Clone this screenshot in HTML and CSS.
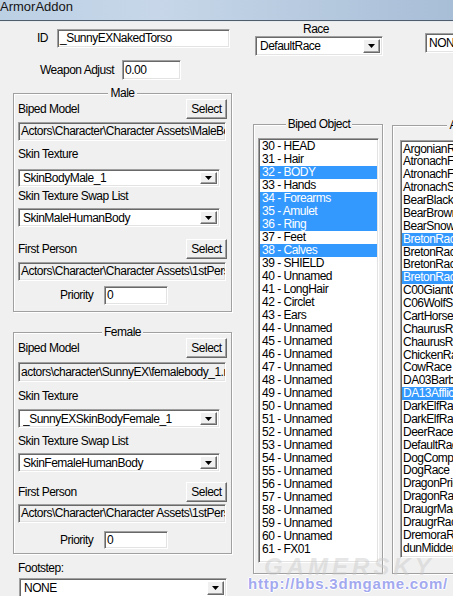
FILE: index.html
```html
<!DOCTYPE html>
<html>
<head>
<meta charset="utf-8">
<title>ArmorAddon</title>
<link rel="stylesheet" href="styles.css">
</head>
<body>
<div class="window">
  <div class="titlebar">ArmorAddon</div>
  <div class="content">
    <div class="col-left">
      <div class="id-row">
        <span class="id-lbl">ID</span>
        <div class="field id-field">_SunnyEXNakedTorso</div>
      </div>
      <div class="wa-row">
        <span class="wa-lbl">Weapon Adjust</span>
        <div class="field wa-field">0.00</div>
      </div>

      <div class="group male">
        <div class="group-title">Male</div>
        <div class="sel-row"><span>Biped Model</span><div class="btn">Select</div></div>
        <div class="field ro path path-a">Actors\Character\Character Assets\MaleBody_1.nif</div>
        <div class="sub-lbl lbl-a">Skin Texture</div>
        <div class="field combo combo-a"><span class="combo-text">SkinBodyMale_1</span><span class="drop"><svg width="7" height="4" viewBox="0 0 7 4"><path d="M0 0H7L3.5 4Z"/></svg></span></div>
        <div class="sub-lbl lbl-b">Skin Texture Swap List</div>
        <div class="field combo combo-b"><span class="combo-text">SkinMaleHumanBody</span><span class="drop"><svg width="7" height="4" viewBox="0 0 7 4"><path d="M0 0H7L3.5 4Z"/></svg></span></div>
        <div class="sel-row sel-b"><span>First Person</span><div class="btn">Select</div></div>
        <div class="field ro path path-b">Actors\Character\Character Assets\1stPersonMaleBody_1.nif</div>
        <div class="prio-row"><span class="prio-lbl">Priority</span><div class="field prio-field">0</div></div>
      </div>

      <div class="group female">
        <div class="group-title">Female</div>
        <div class="sel-row"><span>Biped Model</span><div class="btn">Select</div></div>
        <div class="field ro path path-a">actors\character\SunnyEX\femalebody_1.nif</div>
        <div class="sub-lbl lbl-a">Skin Texture</div>
        <div class="field combo combo-a"><span class="combo-text">_SunnyEXSkinBodyFemale_1</span><span class="drop"><svg width="7" height="4" viewBox="0 0 7 4"><path d="M0 0H7L3.5 4Z"/></svg></span></div>
        <div class="sub-lbl lbl-b">Skin Texture Swap List</div>
        <div class="field combo combo-b"><span class="combo-text">SkinFemaleHumanBody</span><span class="drop"><svg width="7" height="4" viewBox="0 0 7 4"><path d="M0 0H7L3.5 4Z"/></svg></span></div>
        <div class="sel-row sel-b"><span>First Person</span><div class="btn">Select</div></div>
        <div class="field ro path path-b">Actors\Character\Character Assets\1stPersonFemaleBody_1.nif</div>
        <div class="prio-row"><span class="prio-lbl">Priority</span><div class="field prio-field">0</div></div>
      </div>

      <div class="foot-lbl">Footstep:</div>
      <div class="field combo foot-combo"><span class="combo-text">NONE</span><span class="drop"><svg width="7" height="4" viewBox="0 0 7 4"><path d="M0 0H7L3.5 4Z"/></svg></span></div>
    </div>

    <div class="col-mid">
      <div class="race-lbl">Race</div>
      <div class="field combo race-combo"><span class="combo-text">DefaultRace</span><span class="drop"><svg width="7" height="4" viewBox="0 0 7 4"><path d="M0 0H7L3.5 4Z"/></svg></span></div>
      <div class="group biped-group">
        <div class="group-title">Biped Object</div>
        <div class="listbox biped-list">
          <div class="item">30 - HEAD</div>
          <div class="item">31 - Hair</div>
          <div class="item sel">32 - BODY</div>
          <div class="item">33 - Hands</div>
          <div class="item sel">34 - Forearms</div>
          <div class="item sel">35 - Amulet</div>
          <div class="item sel">36 - Ring</div>
          <div class="item">37 - Feet</div>
          <div class="item sel">38 - Calves</div>
          <div class="item">39 - SHIELD</div>
          <div class="item">40 - Unnamed</div>
          <div class="item">41 - LongHair</div>
          <div class="item">42 - Circlet</div>
          <div class="item">43 - Ears</div>
          <div class="item">44 - Unnamed</div>
          <div class="item">45 - Unnamed</div>
          <div class="item">46 - Unnamed</div>
          <div class="item">47 - Unnamed</div>
          <div class="item">48 - Unnamed</div>
          <div class="item">49 - Unnamed</div>
          <div class="item">50 - Unnamed</div>
          <div class="item">51 - Unnamed</div>
          <div class="item">52 - Unnamed</div>
          <div class="item">53 - Unnamed</div>
          <div class="item">54 - Unnamed</div>
          <div class="item">55 - Unnamed</div>
          <div class="item">56 - Unnamed</div>
          <div class="item">57 - Unnamed</div>
          <div class="item">58 - Unnamed</div>
          <div class="item">59 - Unnamed</div>
          <div class="item">60 - Unnamed</div>
          <div class="item">61 - FX01</div>
        </div>
      </div>
    </div>

    <div class="col-right">
      <div class="field none-field">NONE</div>
      <div class="group race-group">
        <div class="group-title">Additional Races</div>
        <div class="listbox race-list">
          <div class="item">ArgonianRace</div>
          <div class="item">AtronachFlameRace</div>
          <div class="item">AtronachFrostRace</div>
          <div class="item">AtronachStormRace</div>
          <div class="item">BearBlackRace</div>
          <div class="item">BearBrownRace</div>
          <div class="item">BearSnowRace</div>
          <div class="item sel">BretonRace</div>
          <div class="item">BretonRaceChild</div>
          <div class="item">BretonRaceChildVampire</div>
          <div class="item sel">BretonRaceVampire</div>
          <div class="item">C00GiantOutsideWhiterunRace</div>
          <div class="item">C06WolfSpiritRace</div>
          <div class="item">CartHorseRace</div>
          <div class="item">ChaurusRace</div>
          <div class="item">ChaurusReaperRace</div>
          <div class="item">ChickenRace</div>
          <div class="item">CowRace</div>
          <div class="item">DA03BarbasDogRace</div>
          <div class="item sel">DA13AfflictedRace</div>
          <div class="item">DarkElfRace</div>
          <div class="item">DarkElfRaceVampire</div>
          <div class="item">DeerRace</div>
          <div class="item">DefaultRace</div>
          <div class="item">DogCompanionRace</div>
          <div class="item">DogRace</div>
          <div class="item">DragonPriestRace</div>
          <div class="item">DragonRace</div>
          <div class="item">DraugrMagicRace</div>
          <div class="item">DraugrRace</div>
          <div class="item">DremoraRace</div>
          <div class="item">dunMiddenLurkerRace</div>
        </div>
      </div>
    </div>
  </div>

  <div class="wm-logo">GAMERSKY</div>
  <div class="wm-url">http://bbs.3dmgame.com/</div>
</div>
</body>
</html>
```

FILE: styles.css
```css
* { box-sizing: border-box; }
html, body { margin: 0; padding: 0; }
body {
  width: 453px;
  height: 596px;
  overflow: hidden;
  background: #f0f0f0;
  font-family: "Liberation Sans", Arial, sans-serif;
  font-size: 12px;
  letter-spacing: -0.5px;
  line-height: 13px;
  color: #000;
  white-space: nowrap;
}
.window { position: relative; width: 453px; height: 596px; overflow: hidden; }

.titlebar {
  height: 21px;
  background: linear-gradient(90deg, #bcd0e4 0%, #c7d7e9 35%, #b8cbe0 65%, #a8bed7 100%);
  border-bottom: 1px solid #4f5d6c;
  box-shadow: 0 1px 0 #e6ebf0;
  font-size: 13px;
  letter-spacing: 0;
  line-height: 14px;
  color: #141414;
}

.content { display: flex; align-items: flex-start; padding-left: 13px; width: 453px; overflow: hidden; }
.col-left { width: 219px; flex-shrink: 0; }
.col-mid { width: 130px; flex-shrink: 0; margin-left: 21px; }
.col-right { width: 200px; flex-shrink: 0; margin-left: 9px; }

/* generic sunken field */
.field {
  background: #fff;
  border-top: 1px solid #a0a0a0;
  border-left: 1px solid #a0a0a0;
  border-bottom: 1px solid #fff;
  border-right: 1px solid #fff;
  box-shadow: inset 1px 1px 0 #696969, inset -1px -1px 0 #e3e3e3;
  padding: 0 3px;
  overflow: hidden;
  display: flex;
  align-items: center;
}
.field.ro { background: #f0f0f0; }

.btn {
  width: 41px;
  height: 20px;
  background: #f0f0f0;
  border-top: 1px solid #fff;
  border-left: 1px solid #fff;
  border-bottom: 1px solid #696969;
  border-right: 1px solid #696969;
  box-shadow: inset -1px -1px 0 #a0a0a0;
  display: flex;
  align-items: center;
  justify-content: center;
  flex-shrink: 0;
}

.combo { padding: 0 2px 0 4px; }
.combo-text { flex: 1; overflow: hidden; line-height: 16px; }
.drop {
  width: 17px;
  height: calc(100% - 4px);
  background: #f0f0f0;
  border-top: 1px solid #fff;
  border-left: 1px solid #fff;
  border-bottom: 1px solid #696969;
  border-right: 1px solid #696969;
  box-shadow: inset -1px -1px 0 #a0a0a0;
  display: flex;
  align-items: center;
  justify-content: center;
  flex-shrink: 0;
}
.drop svg { display: block; fill: #000; }

/* top rows */
.id-row { display: flex; align-items: center; margin-top: 8px; padding-left: 24px; }
.id-lbl { width: 20px; }
.id-field { width: 173px; height: 19px; padding-left: 2px; }
.wa-row { display: flex; align-items: center; margin-top: 12px; padding-left: 27px; }
.wa-lbl { width: 82px; }
.wa-field { width: 59px; height: 20px; padding-left: 2px; }

/* group boxes */
.group {
  border: 1px solid #a0a0a0;
  box-shadow: inset 1px 1px 0 #fff, 1px 1px 0 #fff;
  padding: 0 4px;
}
.group-title {
  display: table;
  margin: -7px auto -1px;
  padding: 0 2px;
  background: #f0f0f0;
}

.male { margin-top: 13px; padding-bottom: 6px; }
.female { margin-top: 20px; padding-bottom: 4px; }

.sel-row { display: flex; align-items: center; justify-content: space-between; height: 20px; }
.path { width: 208px; height: 19px; padding-left: 2px; }
.combo-a, .combo-b { width: 202px; height: 19px; }
.prio-row { display: flex; align-items: center; padding-left: 42px; }
.prio-lbl { width: 44px; }
.prio-field { width: 64px; height: 19px; padding-left: 2px; }

.male .path-a { margin-top: 3px; }
.male .lbl-a { margin-top: 7px; }
.male .combo-a { margin-top: 8px; height: 18px; }
.male .lbl-b { margin-top: 3px; }
.male .combo-b { margin-top: 5px; }
.male .sel-b { margin-top: 12px; }
.male .path-b { margin-top: 3px; }
.male .prio-row { margin-top: 5px; }

.female .path-a { margin-top: 4px; height: 20px; }
.female .lbl-a { margin-top: 8px; }
.female .combo-a { margin-top: 6px; }
.female .lbl-b { margin-top: 7px; }
.female .combo-b { margin-top: 5px; }
.female .sel-b { margin-top: 10px; }
.female .path-b { margin-top: 2px; }
.female .prio-row { margin-top: 8px; }
.female .prio-field { height: 18px; }

.foot-lbl { margin-top: 8px; margin-left: 5px; }
.foot-combo { margin-top: 3px; margin-left: 6px; width: 208px; height: 20px; }

/* middle column */
.race-lbl { margin-top: 2px; text-align: center; padding-right: 4px; }
.race-combo { margin-left: 2px; width: 128px; height: 20px; }
.biped-group { margin-top: 68px; height: 450px; width: 130px; padding: 0 2px 0 4px; }
.biped-group .group-title { margin-bottom: 7px; }

.listbox {
  background: #fff;
  border-top: 1px solid #a0a0a0;
  border-left: 1px solid #a0a0a0;
  border-bottom: 1px solid #fff;
  border-right: 1px solid #fff;
  box-shadow: inset 1px 1px 0 #696969, inset -1px -1px 0 #e3e3e3;
  padding: 1px;
  overflow: hidden;
}
.item { height: 13px; line-height: 13px; }
.item.sel { background: #3399ff; color: #fff; }
.biped-list { width: 121px; height: 425px; }
.biped-list .item { padding-left: 2px; }

/* right column */
.none-field { margin-top: 12px; margin-left: 33px; width: 40px; height: 20px; padding-left: 3px; }
.race-group { margin-top: 72px; width: 190px; height: 449px; padding: 0 0 0 7px; }
.race-group .group-title { margin-bottom: 8px; }
.race-list { width: 200px; height: 418px; padding-top: 1.5px; }
.race-list .item { height: 12.875px; padding-left: 1px; }

/* watermark overlay */
.wm-logo {
  position: absolute;
  left: 264px;
  top: 556px;
  font-style: italic;
  font-weight: bold;
  font-size: 24px;
  line-height: 22px;
  letter-spacing: 4px;
  color: rgba(200, 200, 200, 0.45);
  pointer-events: none;
}
.wm-url {
  position: absolute;
  left: 248px;
  top: 575px;
  font-weight: bold;
  font-size: 15px;
  line-height: 17px;
  letter-spacing: 0.8px;
  color: #a3a9ef;
  text-shadow: 1px 0 0 #fff, -1px 0 0 #fff, 0 1px 0 #fff, 0 -1px 0 #fff;
  pointer-events: none;
}
```
